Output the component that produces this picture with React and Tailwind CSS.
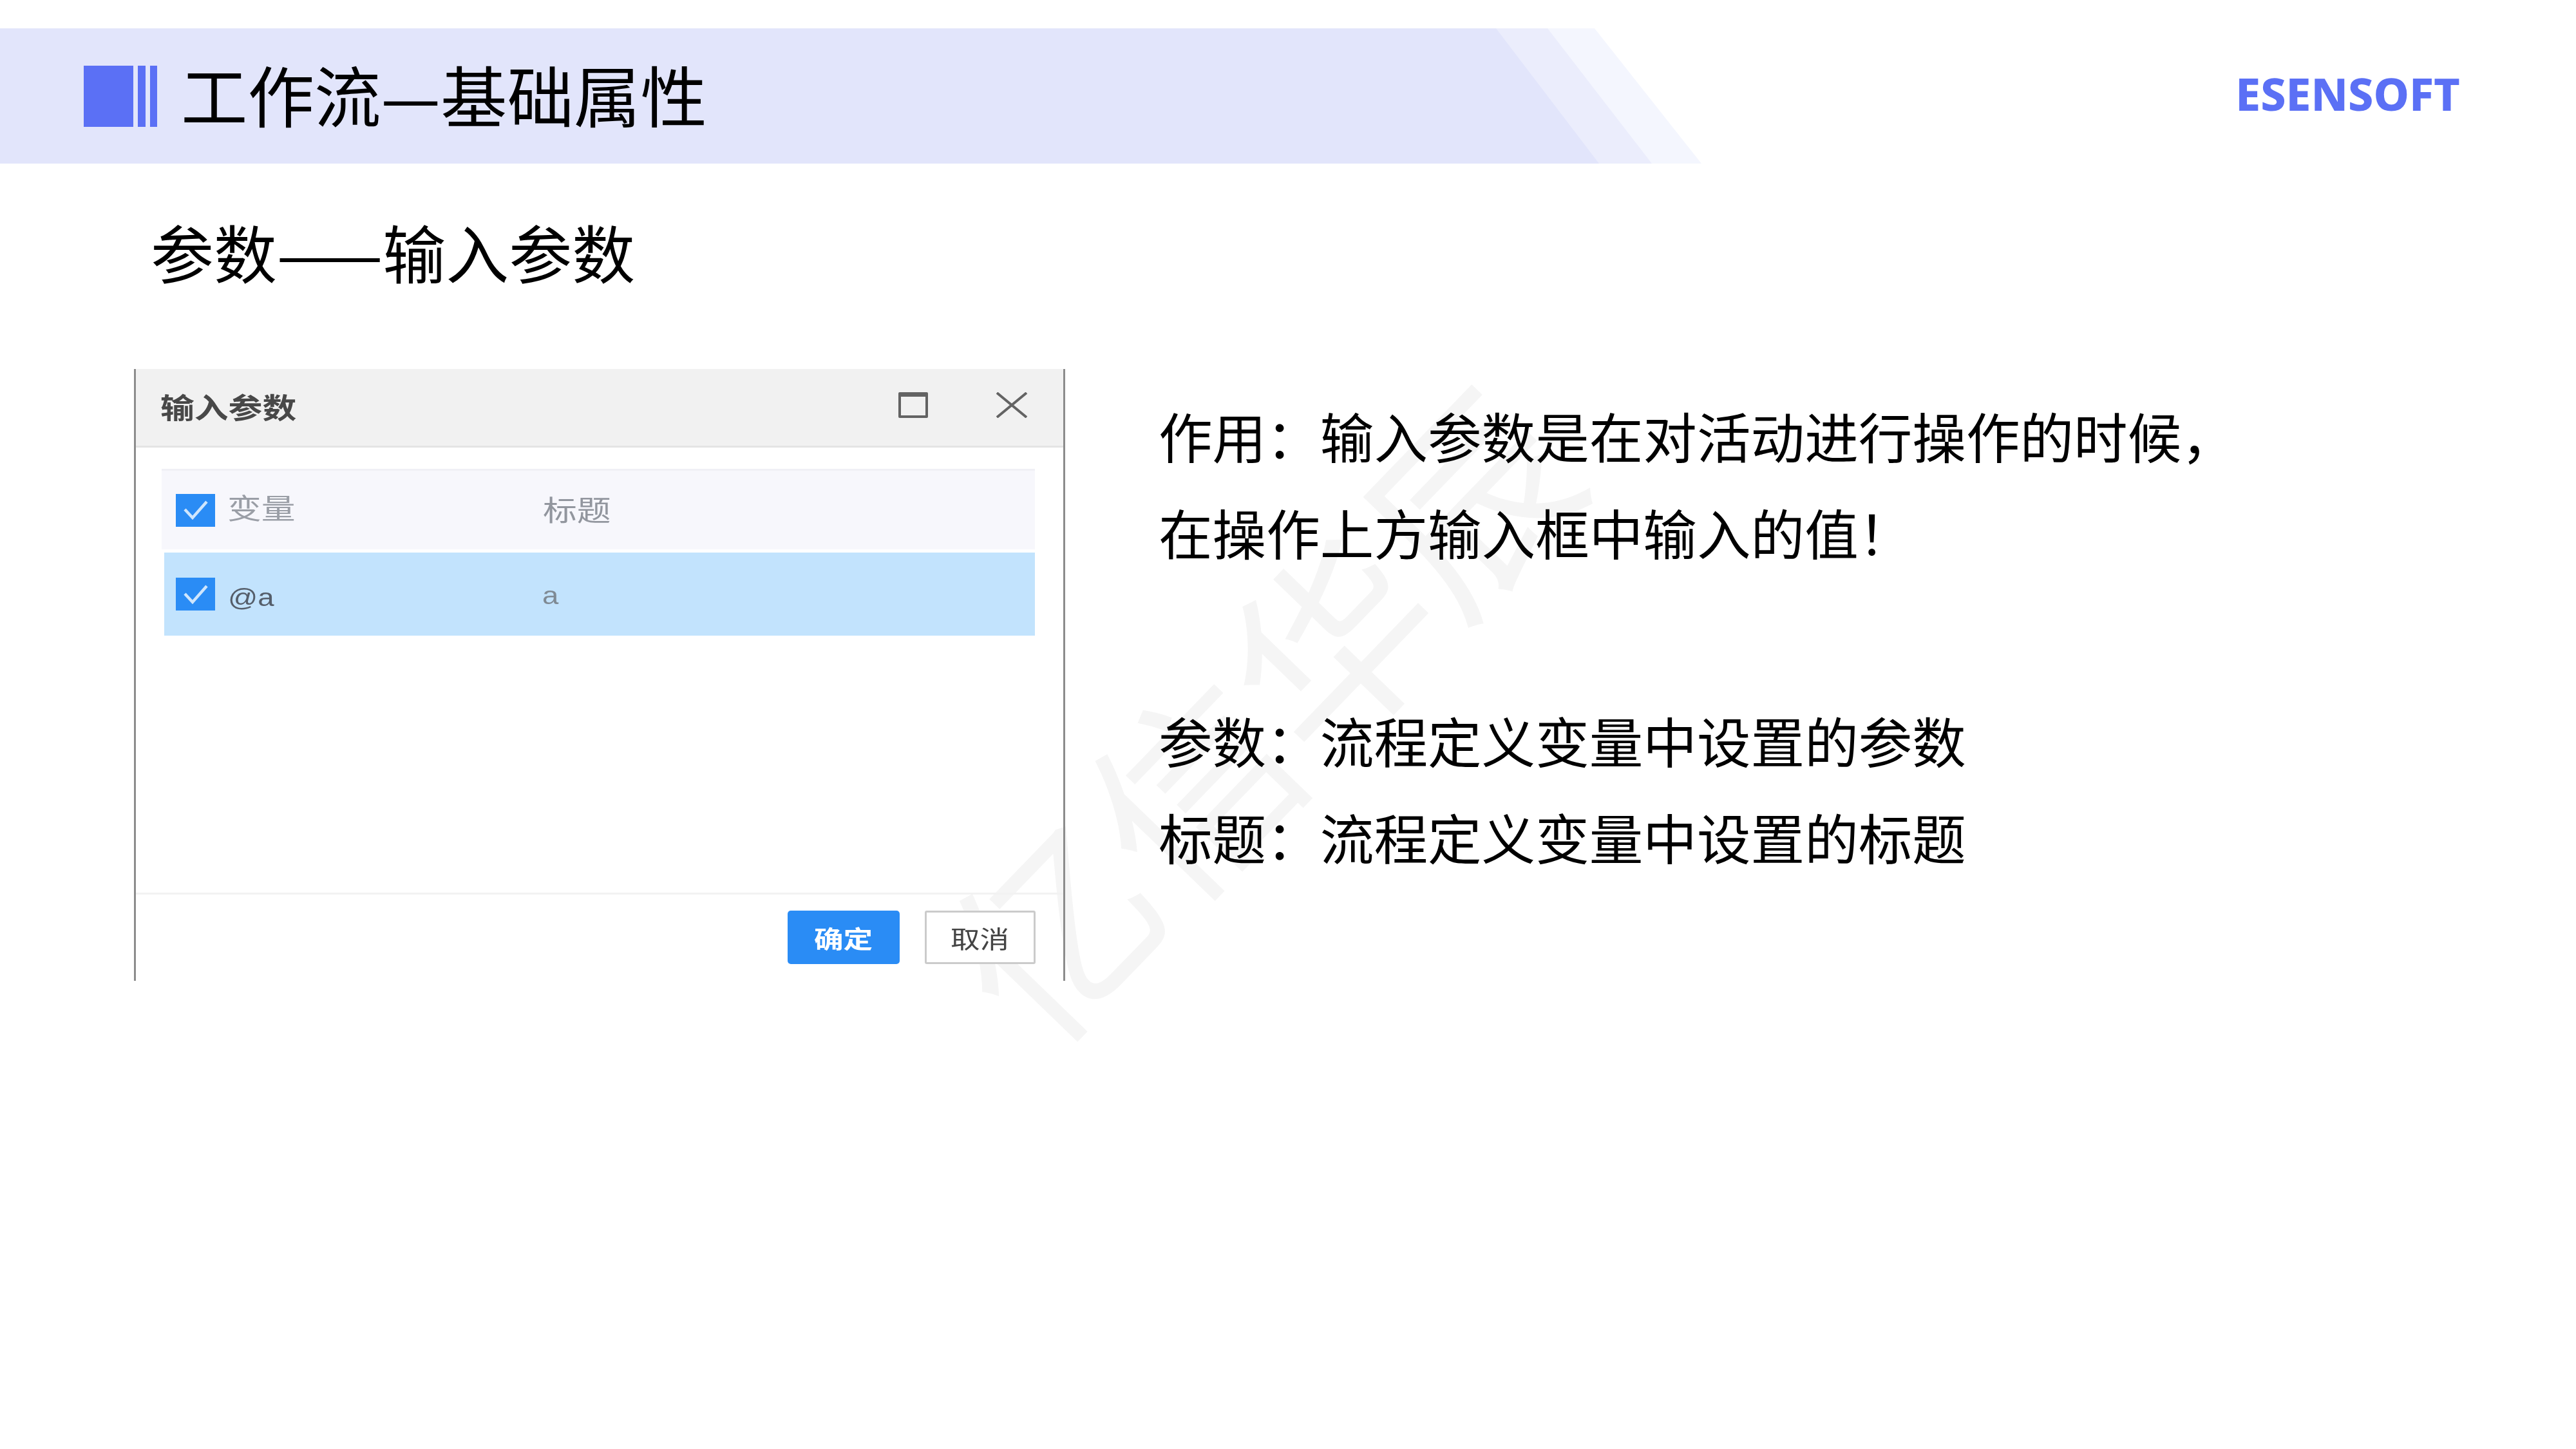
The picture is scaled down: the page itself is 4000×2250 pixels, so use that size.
import React from 'react';

const cjk = "font-['Noto_Sans_CJK_SC','Noto_Sans',sans-serif]";

const CheckBox = () => (
  <div className="w-[61px] h-[51px] bg-[#2a8cf5] shrink-0 flex items-center justify-center">
    <svg width="44" height="34" viewBox="0 0 44 34" fill="none" className="blur-[0.5px]">
      <path d="M5 16 L17 29 L39 4" stroke="#cfe6fd" strokeWidth="4.5" />
    </svg>
  </div>
);

const DialogText = ({ className, children }) => (
  <span className={`${cjk} inline-block origin-left scale-x-[1.2] whitespace-nowrap blur-[0.6px] ${className}`}>{children}</span>
);

const InputParamsDialog = () => (
  <div className="w-[1446px] h-[950px] border-x-[3px] border-x-[#8c8c8c] flex flex-col">
    {/* title bar */}
    <div className="h-[122px] bg-[#f1f1f1] border-b-[3px] border-[#e4e4e4] flex items-center pl-[38px] pr-[55px] shrink-0">
      <DialogText className="text-[44px] leading-[60px] font-bold text-[#484848] -mt-[4px]">输入参数</DialogText>
      <div className="ml-auto flex items-center gap-[105px] -mt-[8px]">
        <div className="w-[46px] h-[40px] border-[4px] border-t-[7px] border-[#636363] rounded-[2px] blur-[0.5px]" />
        <svg width="50" height="40" viewBox="0 0 50 40" fill="none" className="blur-[0.5px]">
          <path d="M2 1 L48 39 M48 1 L2 39" stroke="#636363" strokeWidth="4" />
        </svg>
      </div>
    </div>

    {/* table */}
    <div className="flex-1 pt-[33px] pl-[40px] pr-[44px]">
      <div className="h-[125px] bg-[#f7f7fc] border-t-[3px] border-[#f0f0f5] flex items-center pl-[22px]">
        <CheckBox />
        <DialogText className="text-[44px] leading-[50px] text-[#9a9ea6] ml-[19px] -mt-[10px] w-[490px]">变量</DialogText>
        <DialogText className="text-[44px] leading-[50px] text-[#92969e] -mt-[5px]">标题</DialogText>
      </div>
      <div className="h-[129px] mt-[5px] ml-[4px] bg-[#c2e3fd] flex items-center pl-[18px]">
        <CheckBox />
        <span className="font-['Liberation_Sans',sans-serif] inline-block origin-left scale-x-[1.2] blur-[0.6px] text-[38px] leading-[50px] text-[#555e6a] ml-[20px] mt-[11px] w-[488px]">@a</span>
        <span className="font-['Liberation_Sans',sans-serif] inline-block origin-left scale-x-[1.2] blur-[0.6px] text-[38px] leading-[50px] text-[#7f8a94] mt-[5px]">a</span>
      </div>
    </div>

    {/* footer */}
    <div className="h-[137px] border-t-[3px] border-[#f2f2f2] flex justify-end gap-[39px] pt-[25px] pr-[43px] shrink-0">
      <div className="w-[174px] h-[83px] bg-[#2a8cf5] rounded-[5px] flex items-center justify-center">
        <DialogText className="text-[38px] leading-[50px] font-bold text-white -ml-[16px]">确定</DialogText>
      </div>
      <div className="w-[172px] h-[83px] bg-white border-[3px] border-[#cbcbcb] rounded-[3px] flex items-center justify-center">
        <DialogText className="text-[38px] leading-[50px] text-[#444444] -ml-[16px]">取消</DialogText>
      </div>
    </div>
  </div>
);

export default function App() {
  return (
    <div className={`relative w-[4000px] h-[2250px] bg-white overflow-hidden text-black ${cjk}`}>
      {/* watermark */}
      <div className="absolute left-[1330px] top-[932px] w-[1240px] text-[310px] leading-[340px] font-normal text-[#f5f5f5] whitespace-nowrap -rotate-[46deg] select-none">
        亿信华辰
      </div>

      <div className="relative flex flex-col">
        {/* banner */}
        <div className="relative mt-[44px] h-[210px] flex items-center pl-[130px] pr-[180px]">
          <div className="absolute inset-y-0 left-0 w-[2642px] bg-[#f4f6fe] [clip-path:polygon(0_0,2476px_0,2642px_100%,0_100%)]" />
          <div className="absolute inset-y-0 left-0 w-[2565px] bg-[#ebedfc] [clip-path:polygon(0_0,2403px_0,2565px_100%,0_100%)]" />
          <div className="absolute inset-y-0 left-0 w-[2483px] bg-[#e2e5fb] [clip-path:polygon(0_0,2323px_0,2483px_100%,0_100%)]" />

          <div className="relative flex items-center w-full">
            <div className="flex gap-[7px] h-[95px]">
              <div className="w-[77px] bg-[#5b70f5]" />
              <div className="w-[12px] bg-[#5b70f5]" />
              <div className="w-[11px] bg-[#5b70f5]" />
            </div>
            <h1 className="ml-[37px] -mt-[8px] text-[103.5px] leading-[130px] font-normal">工作流—基础属性</h1>
            <div className="ml-auto font-['Noto_Sans',sans-serif] font-extrabold text-[70px] leading-[80px] text-[#5b70f5] -mt-[8px]">ESENSOFT</div>
          </div>
        </div>

        {/* subtitle */}
        <h2 className="mt-[70px] ml-[234px] text-[98px] leading-[130px] font-normal">参数——输入参数</h2>

        {/* body */}
        <div className="flex mt-[119px] ml-[208px]">
          <InputParamsDialog />
          <div className="ml-[145px] mt-[28px] text-[83.6px] leading-[150px] whitespace-nowrap">
            <p>作用：输入参数是在对活动进行操作的时候，</p>
            <p>在操作上方输入框中输入的值！</p>
            <p className="mt-[173px]">参数：流程定义变量中设置的参数</p>
            <p>标题：流程定义变量中设置的标题</p>
          </div>
        </div>
      </div>
    </div>
  );
}
